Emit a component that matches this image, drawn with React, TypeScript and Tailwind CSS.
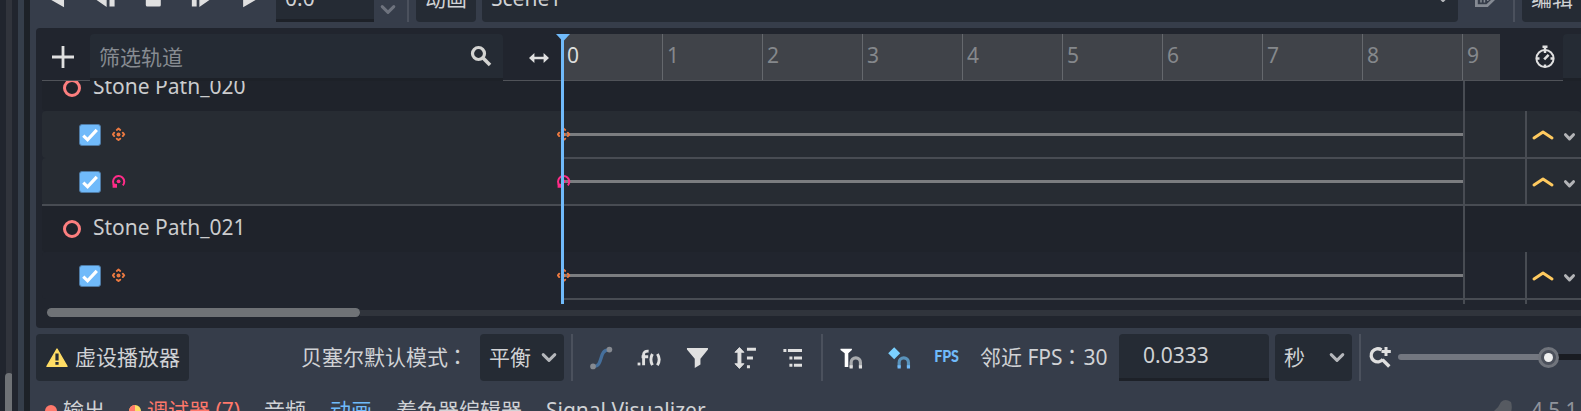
import type { ReactNode } from "react"

const TICKS = [0, 1, 2, 3, 4, 5, 6, 7, 8, 9]

function Icon({ children }: { children: ReactNode }) {
  return (
    <svg viewBox="0 0 16 16" className="size-6 shrink-0" fill="none">
      {children}
    </svg>
  )
}

function IconButton({ children }: { children: ReactNode }) {
  return <div className="flex h-[47px] w-[42px] shrink-0 items-center justify-center">{children}</div>
}

function Separator() {
  return <div className="h-[47px] w-[2px] shrink-0 bg-[#4b515d]" />
}

function Colon() {
  return <span className="relative -top-px -left-px font-['Noto_Sans_CJK_TC',sans-serif]">：</span>
}

function Chevron({ color = "#b5b7bb" }: { color?: string }) {
  return (
    <svg viewBox="0 0 16 12" className="h-3 w-4 shrink-0" fill="none" stroke={color} strokeWidth="3" strokeLinecap="round" strokeLinejoin="round">
      <path d="M2.2 2.6 8 8.4 13.8 2.6" />
    </svg>
  )
}

function PositionKey() {
  return (
    <svg viewBox="0 0 14 14" className="size-[14px] shrink-0" fill="none" stroke="#ea7941" strokeWidth="1.9" strokeLinecap="round" strokeLinejoin="round">
      <circle cx="6.5" cy="7.4" r="2" fill="#ea7941" stroke="none" />
      <path d="M4.8 2.9 6.5 1.5 8.2 2.9M4.8 11.7 6.5 13.1 8.2 11.7M2.2 5.7.9 7.4 2.2 9.1M10.8 5.7 12.2 7.4 10.8 9.1" />
    </svg>
  )
}

function RotationKey() {
  return (
    <svg viewBox="0 0 14 14" className="size-[14px] shrink-0" fill="none">
      <path d="M2.9 11.8A5.6 5.6 0 1 1 10.8 11.4" stroke="#ff2b88" strokeWidth="2" />
      <circle cx="6.6" cy="7.3" r="1.9" fill="#ff2b88" />
      <path d="M.6 13.8V9.6L5 10V13.8Z" fill="#ff2b88" />
    </svg>
  )
}

function Checkbox() {
  return (
    <div className="flex size-[22px] shrink-0 items-center justify-center rounded-[3px] border border-[#4f7ba5] bg-[#70bafa]">
      <svg viewBox="0 0 20 20" className="size-5 shrink-0" fill="none" stroke="#fff" strokeWidth="3.2">
        <path d="M3.3 10.6 7.6 14.8 16.8 4.9" />
      </svg>
    </div>
  )
}

function NodeRow({ name }: { name: string }) {
  return (
    <div className="flex h-[47px] w-full shrink-0 items-center rounded bg-[#1f232b] pl-5">
      <svg viewBox="0 0 20 20" className="mt-px size-5" fill="none" stroke="#fc7f7f" strokeWidth="3">
        <circle cx="10" cy="10" r="7.5" />
      </svg>
      <span className="-mt-[3px] ml-[11px] text-[#cbccce]">{name}</span>
    </div>
  )
}

function TrackRow({ kind, lit }: { kind: "position" | "rotation"; lit?: boolean }) {
  const keyIcon = kind === "position" ? <PositionKey /> : <RotationKey />
  return (
    <div className={`flex h-[47px] w-full shrink-0 rounded ${lit ? "bg-[#272c33]" : "bg-[#21252e]"}`}>
      <div className="flex w-[514px] shrink-0 items-center pl-[37px]">
        <Checkbox />
        <div className="mb-[1px] ml-[11px]">{keyIcon}</div>
      </div>
      <div className="relative flex grow items-start">
        <div className="mt-[22px] ml-[8px] h-[3px] w-[900px] shrink-0 bg-[#7b7d80]" />
        <div className={`ml-[61px] w-[2px] shrink-0 bg-[#484c53] ${lit ? "h-[47px]" : "h-[52px]"}`} />
        <svg viewBox="0 0 54 20" className="mt-[14px] h-5 w-[54px] shrink-0" fill="none" strokeWidth="3" strokeLinecap="round" strokeLinejoin="round">
          <path d="M7 12.9 16 7.1 25 12.9" stroke="#ffca5f" />
          <path d="M38.5 9.7 42.5 13.9 46.5 9.7" stroke="#b3b4b7" />
        </svg>
        <div className="absolute right-0 bottom-[-1px] left-[6px] z-10 h-[2px] bg-[#484c53]" />
        <div className="absolute top-[16px] left-px">{keyIcon}</div>
      </div>
    </div>
  )
}

function TransportBar() {
  return (
    <div className="flex h-[22px] shrink-0 items-end gap-[6px] overflow-hidden pl-[6px]">
      <IconButton><Icon><path d="M12.2 4v8.6L4.4 8.2z" fill="#e0e0e0" stroke="#e0e0e0" /></Icon></IconButton>
      <IconButton><Icon><path d="M8.6 4v8.4L2.6 8.2z" fill="#e0e0e0" stroke="#e0e0e0" /><path d="M11 3.4h3.4v9.6H11z" fill="#e0e0e0" /></Icon></IconButton>
      <IconButton><Icon><rect x="3.2" y="3" width="10" height="10" rx="1" fill="#e0e0e0" /></Icon></IconButton>
      <IconButton><Icon><path d="M1.9 3.4h3.2v9.6H1.9z" fill="#e0e0e0" /><path d="M7.4 4v8.4l6-4.2z" fill="#e0e0e0" stroke="#e0e0e0" /></Icon></IconButton>
      <IconButton><Icon><path d="M4.6 4v8.6l7.6-4.4z" fill="#e0e0e0" stroke="#e0e0e0" /></Icon></IconButton>
      <div className="flex h-[47px] w-[98px] shrink-0 items-center border-b-[3px] border-[#1d2128] bg-[#252b34] pl-[9px]"><span className="mt-[1px]">0.0</span></div>
      <div className="flex h-[24px] w-[21px] shrink-0 items-center"><Chevron color="#6e737e" /></div>
      <Separator />
      <div className="ml-px flex h-[47px] w-[60px] shrink-0 items-center justify-center rounded bg-[#252b34] pb-[2px]">动画</div>
      <div className="flex h-[47px] w-[976px] shrink-0 items-center justify-between rounded bg-[#252b34] pr-[7px] pb-[2px] pl-[9px]">
        Scene1
        <Chevron />
      </div>
      <div className="flex h-[47px] w-[42px] shrink-0 items-center justify-center">
        <svg viewBox="0 0 24 24" className="size-6" fill="none" stroke="#858a93" strokeWidth="2.8">
          <path d="M3.4 4v14.6h10.8l7-6.8V4" />
          <path d="M8 9v6.4M11.4 9v6.4M14.8 9v5" strokeWidth="1.5" />
        </svg>
      </div>
      <div className="ml-px"><Separator /></div>
      <div className="ml-px flex h-[47px] w-[80px] shrink-0 items-center rounded bg-[#252b34] pb-[2px] pl-[9px]">编辑</div>
    </div>
  )
}

function TimelineHeader() {
  return (
    <div className="flex h-[47px] shrink-0 border-b border-[#505359] text-[#cbccce]">
      <div className="flex h-[47px] w-[48px] shrink-0 items-center justify-center pr-[6px] pb-px">
        <svg viewBox="0 0 22 22" className="size-[22px]" stroke="#e0e0e0" strokeWidth="2.8">
          <path d="M11 0v22M0 11h22" />
        </svg>
      </div>
      <div className="flex h-[47px] w-[413px] shrink-0 items-center justify-between rounded-t border-b-[3px] border-[#1d2128] bg-[#252b34] pr-[11px] pl-[9px] text-[#878b91]">
        <span className="mt-px">筛选轨道</span>
        <svg viewBox="0 0 22 22" className="size-[22px]" fill="none" stroke="#d4d4d2">
          <circle cx="8.5" cy="8.5" r="6" strokeWidth="3.2" />
          <path d="M12.8 12.8 20 20" strokeWidth="3.6" />
        </svg>
      </div>
      <div className="flex h-[47px] w-[59px] shrink-0 items-center justify-end pr-[12px]">
        <svg viewBox="0 0 22 12" className="h-3 w-[22px]" fill="#e0e0e0">
          <path d="M1 6 6.4 1v3.7h9.2V1L21 6l-5.4 5V7.3H6.4V11z" />
        </svg>
      </div>
      <div className="flex w-[938px] shrink-0 overflow-hidden bg-[#404349]">
        {TICKS.map((t) => (
          <div
            key={t}
            className={`flex w-[100px] shrink-0 pt-[7px] ${t === 0 ? "pl-[5px] text-[#dcdddd]" : "border-l border-[#65686d] pl-[4px] text-[#85888c]"}`}
          >
            {t}
          </div>
        ))}
      </div>
      <div className="flex h-[47px] w-[63px] shrink-0 items-center pb-[2px] pl-[33px]">
        <svg viewBox="0 0 24 24" className="size-6" fill="none" stroke="#e0e0e0">
          <circle cx="12" cy="13.5" r="8.6" strokeWidth="2" />
          <path d="M9.5 1.8h5M12 2v6M12 19.5v3M3.5 13.5h3M17.5 13.5h3" strokeWidth="2.4" />
          <path d="M11.2 14.3 15.6 9.9" strokeWidth="2.6" />
        </svg>
      </div>
      <div className="h-[47px] w-5 shrink-0 rounded-tl border-b-[3px] border-[#1d2128] bg-[#252b34]" />
    </div>
  )
}

function TrackPanel() {
  return (
    <div className="ml-[6px] flex h-[300px] shrink-0 flex-col rounded-l bg-[#21252e] pt-[6px] pl-[6px]">
      <div className="relative">
        <TimelineHeader />
        <div className="relative flex h-[223px] flex-col overflow-hidden">
          <div className="flex h-[30px] shrink-0 flex-col justify-end">
            <NodeRow name="Stone Path_020" />
          </div>
          <TrackRow kind="position" lit />
          <TrackRow kind="rotation" lit />
          <div className="relative z-10">
            <div className="absolute inset-x-0 top-[-1px] h-[2px] bg-[#484c53]" />
            <NodeRow name="Stone Path_021" />
          </div>
          <TrackRow kind="position" />
          {/* animation end */}
          <div className="absolute inset-y-0 left-[1421px] z-10 w-[2px] bg-[#484c53]" />
        </div>
        {/* playhead */}
        <div className="absolute inset-y-0 left-[519px] z-20 w-[3px] bg-[#70bafa]" />
        <svg viewBox="0 0 14 7" className="absolute top-0 left-[514px] z-20 h-[7px] w-[14px]" fill="#70bafa">
          <path d="M0 0h14L7.5 7h-1z" />
        </svg>
      </div>
      <div className="mt-[4px] flex h-[10px] items-center pl-[5px]">
        <div className="-mt-px h-[9px] w-[313px] shrink-0 rounded-full bg-[#6f7276]" />
        <div className="h-[6px] grow bg-[#30343c]" />
      </div>
    </div>
  )
}

function Magnet({ color, feet }: { color: string; feet: string }) {
  return (
    <>
      <path d="M8.1 14.2v-3.2a3.1 3.1 0 0 1 6.2 0v3.2" stroke={color} strokeWidth="2.1" />
      <path d="M7.05 12.9h2.1v2.1h-2.1zM13.25 12.9h2.1v2.1h-2.1z" fill={feet} />
    </>
  )
}

function ToolBar() {
  return (
    <div className="mt-[6px] flex h-[47px] shrink-0 items-center pl-[6px]">
      <div className="flex h-[47px] w-[153px] shrink-0 items-center rounded bg-[#252b34] pl-[9px]">
        <svg viewBox="0 0 24 24" className="size-6 shrink-0" fill="#ffdd65">
          <path d="M12 3 22 20.4H2Z" stroke="#ffdd65" strokeWidth="1.4" strokeLinejoin="round" />
          <path d="M10.4 7.5h3.2v7h-3.2zM10.4 16h3.2v2.7h-3.2z" fill="#252b34" />
        </svg>
        <span className="-mt-[2px] ml-[6px] whitespace-nowrap">虚设播放器</span>
      </div>
      <span className="-mt-[2px] ml-[112px] w-[179px] shrink-0 whitespace-nowrap">贝塞尔默认模式<Colon /></span>
      <div className="flex h-[47px] w-[84px] shrink-0 items-center justify-between rounded bg-[#252b34] pr-[7px] pl-[9px]">
        <span className="-mt-[2px]">平衡</span>
        <Chevron />
      </div>
      <div className="mr-[7px] ml-[7px]"><Separator /></div>
      <div className="flex gap-[6px]">
        <IconButton>
          <Icon>
            <path d="M3 13.6C10 13.6 6 2.6 13.2 2.6" stroke="#456f9c" strokeWidth="2.2" />
            <circle cx="2.7" cy="13.6" r="1.9" fill="#868a91" />
            <circle cx="13.6" cy="2.4" r="1.9" fill="#868a91" />
          </Icon>
        </IconButton>
        <IconButton>
          <svg viewBox="0 0 24 24" className="size-6 shrink-0" fill="none" stroke="#e0e0e0" strokeWidth="2.9">
            <path d="M.6 16.6h2.8v2.8H.6z" fill="#e0e0e0" stroke="none" />
            <path d="M6.6 19.2V8.6Q6.6 4.8 11.6 5.2M4.6 10.8h6.6" />
            <path d="M15.4 8Q12.4 13.4 15.4 19.2M20.4 8Q24 13.4 20.4 19.2" />
          </svg>
        </IconButton>
        <IconButton><Icon><path d="M1.3 1.3H15.3V2.3L10.3 8.5V12.3L6.5 14.7V8.5L1.3 2.3Z" fill="#e0e0e0" /></Icon></IconButton>
        <IconButton>
          <Icon>
            <path d="M4.3 1 7.3 4.2H5.3V11.8H7.3L4.3 15 1.3 11.8H3.3V4.2H1.3Z" fill="#e0e0e0" stroke="#e0e0e0" strokeWidth=".6" />
            <path d="M9.3 2.1h6M9.3 8h4M9.3 13.8h2" stroke="#e0e0e0" strokeWidth="2" />
          </Icon>
        </IconButton>
        <IconButton>
          <Icon>
            <path d="M1.6 3h2M4.6 3H14M5.6 8h2M8.6 8H14M5.6 12.8h2M8.6 12.8H14" stroke="#e0e0e0" strokeWidth="2" />
          </Icon>
        </IconButton>
      </div>
      <div className="mr-[7px] ml-[7px]"><Separator /></div>
      <div className="flex gap-[6px]">
        <IconButton>
          <Icon>
            <path d="M1 1.8H8.6V2.6L6.2 4.9V14H3.8V4.9L1 2.6Z" fill="#fff" />
            <Magnet color="#a9abae" feet="#e0e0e0" />
          </Icon>
        </IconButton>
        <IconButton>
          <Icon>
            <path d="M4.8.9 8.8 4.9 4.8 8.9.8 4.9Z" fill="#7ad0ff" />
            <Magnet color="#5a93bb" feet="#70bafa" />
          </Icon>
        </IconButton>
        <IconButton>
          <span className="-mt-[3px] mr-px scale-x-[0.84] font-['Lato',sans-serif] text-[17px] font-black tracking-[-0.2px] text-[#70bafa]">FPS</span>
        </IconButton>
      </div>
      <span className="-mt-[2px] ml-[12px] w-[139px] shrink-0 whitespace-nowrap">邻近 FPS<Colon />30</span>
      <div className="flex h-[47px] w-[150px] shrink-0 items-center rounded-t border-b-[3px] border-[#1d2128] bg-[#252b34] pb-[3px] pl-[24px]">0.0333</div>
      <div className="ml-[6px] flex h-[47px] w-[77px] shrink-0 items-center justify-between rounded bg-[#252b34] pr-[7px] pl-[9px]">
        <span className="-mt-[2px]">秒</span>
        <Chevron />
      </div>
      <div className="mr-[7px] ml-[7px]"><Separator /></div>
      <Icon>
        <path d="M9 2.6A4.4 4.4 0 1 0 10 8.9" stroke="#e0e0e0" strokeWidth="2.2" />
        <path d="M9.6 9.1 14.2 13.7" stroke="#e0e0e0" strokeWidth="2.3" />
        <path d="M12 .6v6M9 3.6h6.2" stroke="#e0e0e0" strokeWidth="2" />
      </Icon>
      <div className="-mt-px ml-[6px] h-[6px] w-[142px] shrink-0 rounded-l-sm bg-[#737780]" />
      <div className="-mt-px flex h-[6px] w-[41px] shrink-0 items-center bg-[#191c22]">
        <div className="-ml-[2px] flex size-[21px] shrink-0 items-center justify-center rounded-full border-[3px] border-[#70747c] bg-[#4c515c]">
          <div className="size-[9px] rounded-full bg-[#f0f0f0]" />
        </div>
      </div>
    </div>
  )
}

function BottomTabs() {
  return (
    <div className="mt-[6px] flex h-[47px] shrink-0 items-center whitespace-nowrap">
      <div className="ml-[15px] size-3 rounded-full bg-[#ff786b]" />
      <span className="-mt-[2px] ml-[6px] w-[66px]">输出</span>
      <div className="flex size-3 overflow-hidden rounded-full bg-[#ffdd65]">
        <div className="w-1/2 bg-[#ff786b]" />
      </div>
      <span className="-mt-[2px] ml-[6px] w-[117px] text-[#ff786b]">调试器 (7)</span>
      <span className="-mt-[2px] w-[66px]">音频</span>
      <span className="-mt-[2px] w-[66px] text-[#70bafa]">动画</span>
      <span className="-mt-[2px] w-[150px]">着色器编辑器</span>
      <span className="-mt-[2px]">Signal Visualizer</span>
      <svg viewBox="0 0 20 24" className="mr-[18px] ml-auto h-6 w-5 shrink-0" fill="#565a61">
        <path d="M1 12Q6 8 8 3Q12-1 18 3Q20 9 17 16L8 22Z" />
      </svg>
      <span className="-mt-[2px] w-[50px] shrink-0 tracking-[-0.2px] text-[#8f939b]">4.5.1</span>
    </div>
  )
}

function App() {
  return (
    <div className="flex h-[411px] w-[1581px] overflow-hidden bg-[#363d4a] font-['Noto_Sans','Noto_Sans_CJK_SC',sans-serif] text-[21px] leading-[28px] text-[#d0d2d5]">
      <div className="w-[6px] shrink-0 bg-[#21252e]" />
      <div className="flex w-[6px] shrink-0 flex-col justify-end bg-[#31343c]">
        <div className="-mx-[1px] h-[38px] rounded-t-full bg-[#6f7276]" />
      </div>
      <div className="w-[6px] shrink-0 bg-[#21252e]" />
      <div className="w-[6px] shrink-0 bg-[#353e4a]" />
      <div className="w-[6px] shrink-0 bg-[#1d2228]" />
      <div className="flex w-[1551px] shrink-0 flex-col">
        <TransportBar />
        <div className="h-[6px] shrink-0" />
        <TrackPanel />
        <ToolBar />
        <BottomTabs />
      </div>
    </div>
  )
}

export default App
